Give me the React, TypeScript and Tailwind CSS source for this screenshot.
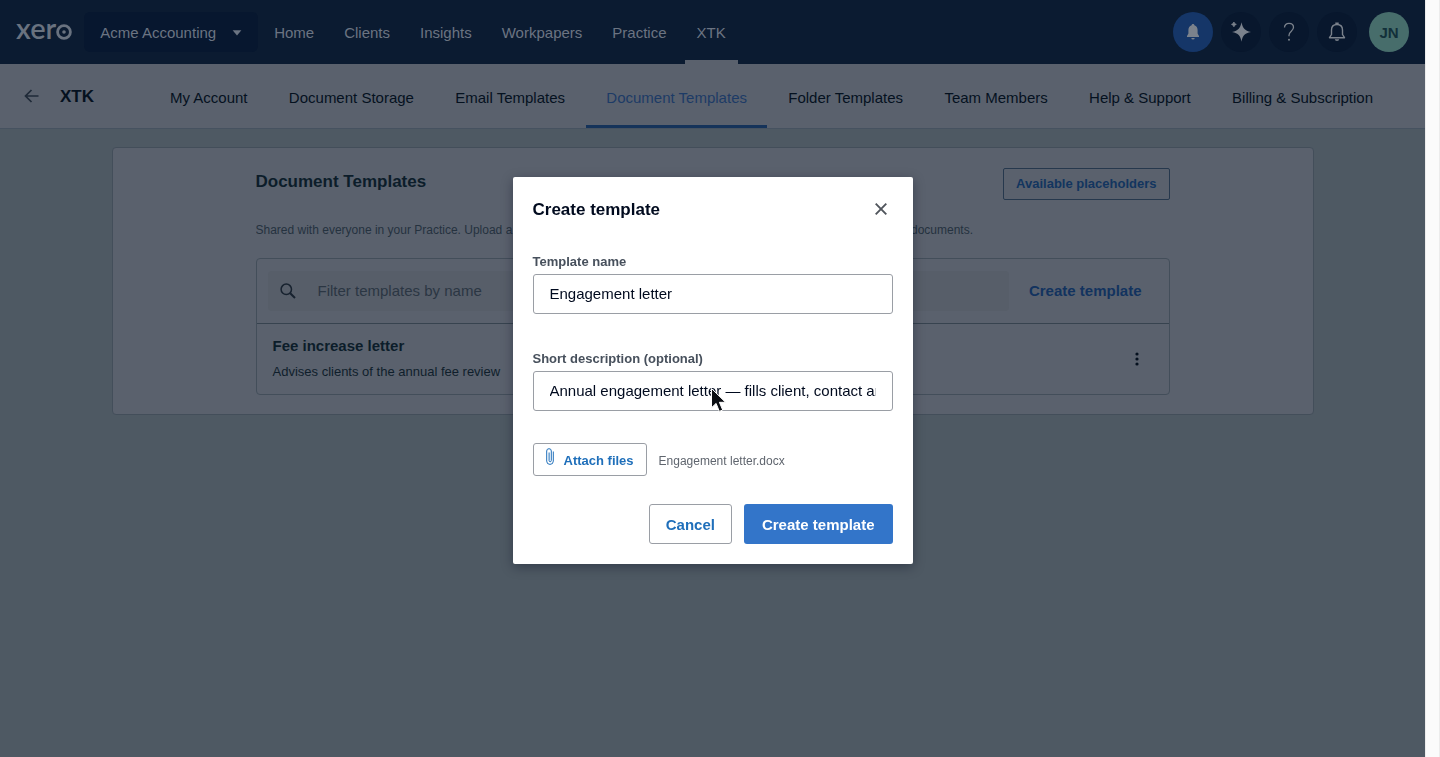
import { useState } from "react";

const mainLinks = ["Home", "Clients", "Insights", "Workpapers", "Practice", "XTK"];

const tabs = [
    "My Account",
    "Document Storage",
    "Email Templates",
    "Document Templates",
    "Folder Templates",
    "Team Members",
    "Help & Support",
    "Billing & Subscription",
];

function Logo(){
    return(
        <a href="#" className="flex items-center text-[#69727f]">
            <span className="font-[Lato,sans-serif] text-[29px] leading-8 font-semibold -mt-2">xer</span>
            <svg width="16" height="16" viewBox="0 0 16 16" role="img" aria-label="o">
                <circle cx="8" cy="8" r="6.4" fill="none" stroke="currentColor" strokeWidth="2.8" />
                <circle cx="8" cy="8" r="1.8" fill="currentColor" />
            </svg>
        </a>
    )
}

function TopBar(){
    return(
        <header className="flex h-16 items-center bg-[#0b1b31] pl-4 pr-4 text-[15px] text-[#6b7482]">
            <Logo />
            <button type="button" className="ml-3 flex h-10 items-center gap-4 rounded-md bg-[#07172f] px-4 pt-0.5">
                Acme Accounting
                <svg width="10" height="6" viewBox="0 0 10 6" aria-hidden="true">
                    <path d="M0.6 0.3h8.8L5 5.6z" fill="currentColor" />
                </svg>
            </button>
            <nav className="ml-1 flex h-16 gap-1.5">
                {mainLinks.map((link) => (
                    <a
                        key={link}
                        href="#"
                        className={
                            link === "XTK"
                                ? "flex items-center border-b-4 border-[#5a616d] px-3 pt-1.5"
                                : "flex items-center px-3 pt-0.5"
                        }
                    >
                        {link}
                    </a>
                ))}
            </nav>

            <div className="ml-auto flex items-center gap-2 text-[#7b828c]">
                <button type="button" aria-label="Updates" className="flex size-10 items-center justify-center rounded-full bg-[#153668]">
                    <svg width="16" height="18" viewBox="0 0 16 18" fill="currentColor" aria-hidden="true">
                        <path d="M8 1c.8 0 1.3.5 1.4 1.2 2.1.7 3.2 2.5 3.2 4.800v3.600L14 13v1H2v-1l1.400-2.400V7c0-2.300 1.100-4.100 3.200-4.800C6.700 1.500 7.200 1 8 1z" />
                        <path d="M6.300 15h3.400a1.700 1.500 0 0 1-3.400 0z" />
                    </svg>
                </button>
                <button type="button" aria-label="Assistant" className="flex size-10 items-center justify-center rounded-full bg-[#08172d]">
                    <svg width="22" height="22" viewBox="0 0 22 22" fill="currentColor" aria-hidden="true">
                        <path d="M11.500 1.300c1.200 6 3 8.300 9.500 9.700-6.500 1.400-8.300 3.700-9.500 9.700C10.300 14.700 8.500 12.400 2 11c6.500-1.400 8.300-3.700 9.500-9.700z" />
                        <path d="M3.900 1l.8 1.600 1.600.8-1.600.8-.8 1.600-.8-1.600-1.600-.8 1.600-.8z" stroke="currentColor" strokeWidth="0.800" />
                    </svg>
                </button>
                <button type="button" aria-label="Help" className="flex size-10 items-center justify-center rounded-full bg-[#08172d]">
                    <svg width="12" height="20" viewBox="0 0 12 20" fill="none" stroke="currentColor" strokeWidth="1.300" aria-hidden="true">
                        <path d="M1.500 5.500C1.500 3 3.300 1.300 6 1.300s4.500 1.600 4.500 4c0 3.800-4.500 4-4.500 8v1" />
                        <circle cx="6" cy="17.800" r="1" fill="currentColor" stroke="none" />
                    </svg>
                </button>
                <button type="button" aria-label="Notifications" className="flex size-10 items-center justify-center rounded-full bg-[#08172d]">
                    <svg width="18" height="20" viewBox="0 0 18 20" fill="none" stroke="currentColor" strokeWidth="1.400" aria-hidden="true">
                        <path d="M9 2.500c-3.400 0-5.500 2.300-5.500 5.400v4.600L1.500 15.700h15l-2-3.200V7.900c0-3.100-2.100-5.400-5.500-5.400z" strokeLinejoin="round" />
                        <path d="M8 2.300V1.300h2v1" />
                        <path d="M6.800 17.300a2.200 1.700 0 0 0 4.400 0z" fill="currentColor" stroke="none" />
                    </svg>
                </button>
                <button type="button" className="ml-1 size-10 rounded-full bg-[#476d6b] pt-0.5 text-[15px] font-bold text-[#12303a]">JN</button>
            </div>
        </header>
    )
}

function TabBar(){
    return(
        <div className="flex h-[65px] items-center border-b border-[#465260] bg-[#5a616d] pl-6 pr-8 text-[#05111f]">
            <a href="#" aria-label="Back" className="text-[#1f2a38]">
                <svg width="16" height="14" viewBox="0 0 16 14" fill="none" stroke="currentColor" strokeWidth="1.700" aria-hidden="true">
                    <path d="M14.500 7H2M7.500 1L1.500 7l6 6" />
                </svg>
            </a>
            <h1 className="ml-5 w-[90px] shrink-0 pt-0.5 text-[17px] font-bold">XTK</h1>
            <nav className="flex h-16 flex-1 justify-between text-[15px]">
                {tabs.map((tab) => (
                    <a
                        key={tab}
                        href="#"
                        className={
                            tab === "Document Templates"
                                ? "flex items-center border-b-3 border-[#15335a] px-5 pt-2 text-[#1d3b66]"
                                : "flex items-center px-5 pt-1"
                        }
                    >
                        {tab}
                    </a>
                ))}
            </nav>
        </div>
    )
}

function TemplatesCard(){
    return(
        <main className="mx-auto mt-[18px] w-full max-w-[1202px] rounded-sm border border-[#434e5a] bg-[#5a616d] pt-5 pb-[19px]">
            <div className="mx-auto max-w-[914px]">
                <div className="flex items-start justify-between">
                    <h2 className="text-[17px] leading-7 font-bold text-[#0c1d2a]">Document Templates</h2>
                    <button type="button" className="h-8 rounded-xs border border-[#26384d] px-3 text-[13px] font-bold text-[#12355f]">
                        Available placeholders
                    </button>
                </div>
                <p className="mt-5 truncate text-xs leading-5 text-[#25323f]">
                    Shared with everyone in your Practice. Upload a Word file with placeholders, and client details are filled in when you create documents.
                </p>

                <section className="mt-[18px] rounded-sm border border-[#434e5a]">
                    <div className="flex h-[65px] items-center gap-1 border-b border-[#37434f] px-[11px]">
                        <label className="flex h-10 flex-1 items-center rounded-sm bg-[#575e69] pl-3">
                            <svg width="16" height="16" viewBox="0 0 16 16" fill="none" stroke="#17222f" aria-hidden="true">
                                <circle cx="6.300" cy="6.300" r="5.200" strokeWidth="1.500" />
                                <path d="M10.200 10.200l4.800 4.800" strokeWidth="2" />
                            </svg>
                            <input
                                type="text"
                                aria-label="Filter templates by name"
                                placeholder="Filter templates by name"
                                className="ml-[22px] flex-1 text-[15px] outline-none placeholder:text-[#2b3643]"
                            />
                        </label>
                        <button type="button" className="h-10 px-4 text-[15px] font-bold text-[#12335f]">Create template</button>
                    </div>
                    <div className="flex h-[70px] items-center justify-between pl-4 pr-6">
                        <div>
                            <h3 className="text-[15px] leading-6 font-bold text-[#0c1d2a]">Fee increase letter</h3>
                            <p className="mt-0.5 text-[13px] leading-6 text-[#0f1e2b]">Advises clients of the annual fee review</p>
                        </div>
                        <button type="button" aria-label="Template options" className="flex w-4 justify-center">
                            <svg width="4" height="14" viewBox="0 0 4 14" fill="#05111f" aria-hidden="true">
                                <circle cx="2" cy="2" r="1.600" />
                                <circle cx="2" cy="7" r="1.600" />
                                <circle cx="2" cy="12" r="1.600" />
                            </svg>
                        </button>
                    </div>
                </section>
            </div>
        </main>
    )
}

function CreateTemplateDialog(){
    const [name, setName] = useState("Engagement letter");
    const [description, setDescription] = useState("Annual engagement letter — fills client, contact and fee details");

    return(
        <div className="fixed inset-y-0 left-0 right-[15px] flex items-center justify-center pb-4">
            <form
                role="dialog"
                aria-labelledby="dialog-title"
                className="w-[400px] rounded-xs bg-white px-5 pb-5 text-[#000a1e] shadow-[0_3px_12px_rgba(0,10,30,0.35)]"
            >
                <div className="flex h-16 items-center justify-between">
                    <h2 id="dialog-title" className="pt-0.5 text-[17px] font-bold">Create template</h2>
                    <button type="button" aria-label="Close" className="flex size-6 items-center justify-center">
                        <svg width="12" height="12" viewBox="0 0 12 12" stroke="#50555c" strokeWidth="1.900" aria-hidden="true">
                            <path d="M0.700 0.700l10.600 10.600M11.300 0.700L0.700 11.300" />
                        </svg>
                    </button>
                </div>

                <div className="flex flex-col gap-8 pt-2">
                    <div>
                        <label htmlFor="template-name" className="block text-[13px] leading-[25px] font-bold text-[#47505c]">Template name</label>
                        <input
                            id="template-name"
                            type="text"
                            value={name}
                            onChange={(e) => setName(e.target.value)}
                            className="h-10 w-full rounded-[3px] border border-[#9a9ea5] px-4 pb-0.5 text-[15px]"
                        />
                    </div>
                    <div className="relative">
                        <label htmlFor="short-description" className="block text-[13px] leading-[25px] font-bold text-[#47505c]">Short description (optional)</label>
                        <input
                            id="short-description"
                            type="text"
                            value={description}
                            onChange={(e) => setDescription(e.target.value)}
                            className="h-10 w-full rounded-[3px] border border-[#9a9ea5] px-4 pb-0.5 text-[15px]"
                        />
                        {/* mouse pointer */}
                        <svg width="17" height="26" viewBox="0 0 17 26" className="absolute left-[177px] top-[41px]" aria-hidden="true">
                            <path d="M1.500 1.500v19.200l4.600-4.300 3.200 8 3.400-1.400-3.300-7.700h6.100z" fill="#0a0d12" stroke="#fff" strokeWidth="1" />
                        </svg>
                    </div>
                    <div className="flex items-center gap-3">
                        <button type="button" className="flex h-[33px] items-center gap-2.5 rounded-[3px] border border-[#9a9ea5] px-3 pt-0.5 text-[13px] font-bold text-[#1f6fba]">
                            <svg width="8" height="17" viewBox="0 0 8 17" fill="none" stroke="currentColor" strokeWidth="1" className="mb-2" aria-hidden="true">
                                <path d="M7.300 3.500v9.600a3.300 3.300 0 0 1-6.600 0V3a2.300 2.300 0 0 1 4.600 0v9.600a1.100 1.100 0 0 1-2.200 0V4.500" />
                            </svg>
                            Attach files
                        </button>
                        <span className="pt-0.5 text-xs text-[#5f656e]">Engagement letter.docx</span>
                    </div>
                </div>

                <div className="mt-7 flex justify-end gap-3 text-[15px] font-bold">
                    <button type="button" className="h-10 rounded-[3px] border border-[#9a9ea5] px-4 pt-0.5 text-[#1f6fba]">Cancel</button>
                    <button type="submit" className="h-10 rounded-[3px] bg-[#3375c9] px-[18px] pt-0.5 text-white">Create template</button>
                </div>
            </form>
        </div>
    )
}

function App(){
    return(
        <div className="flex min-h-screen font-['Liberation_Sans',Arial,sans-serif]">
            <div className="flex min-w-0 flex-1 flex-col bg-[#4e5963]">
                <TopBar />
                <TabBar />
                <TemplatesCard />
            </div>
            <div className="w-[15px] border-x border-[#ececec] bg-[#fbfbfb]"></div>
            <CreateTemplateDialog />
        </div>
    )
}

export default App;
